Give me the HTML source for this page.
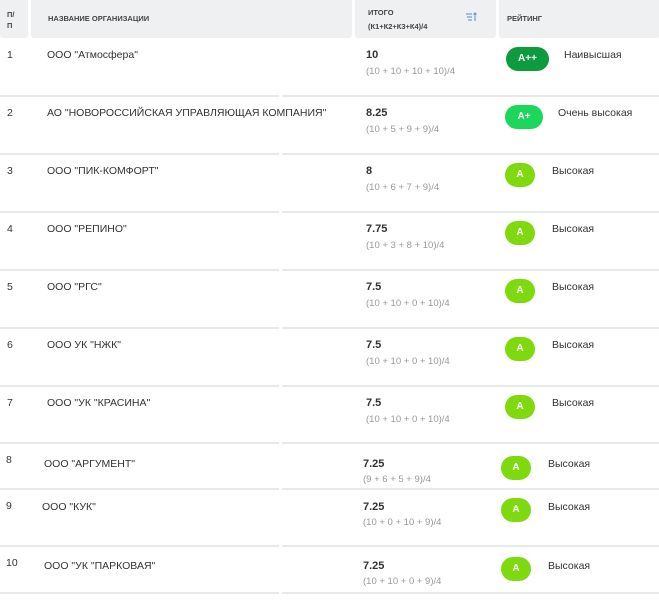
<!DOCTYPE html>
<html><head><meta charset="utf-8"><style>
*{margin:0;padding:0;box-sizing:border-box}
body{width:659px;height:600px;background:#fff;font-family:"Liberation Sans",sans-serif;color:#333;position:relative;overflow:hidden}
.h{position:absolute;top:0;height:38px;background:#eef0f1;font-size:7.5px;font-weight:bold;color:#444;border-radius:0 0 3px 3px}
.a{position:absolute;white-space:nowrap}
.t{font-size:10.5px;color:#333}
.s{font-size:11px;font-weight:bold;color:#333}
.f{font-size:9.5px;color:#999}
.ln{position:absolute;height:2px;background:#e6eaeb}
.b{position:absolute;height:24px;border-radius:12px;color:#fff;font-size:10px;font-weight:bold;text-align:center;line-height:24px}
</style></head><body>
<div class="h" style="left:0;width:28px"><div class="a" style="left:7px;top:9px;line-height:11px">П/<br>П</div></div>
<div class="h" style="left:31px;width:321px"><div class="a" style="left:17px;top:14px">НАЗВАНИЕ ОРГАНИЗАЦИИ</div></div>
<div class="h" style="left:355px;width:141px"><div class="a" style="left:13px;top:6px;line-height:14px">ИТОГО<br>(К1+К2+К3+К4)/4</div>
<svg class="a" style="left:111px;top:12px" width="12" height="10" viewBox="0 0 12 10"><path d="M0 2h6M1 5h5M2 8h4M9 1v8M7.5 2.5L9 1l1.5 1.5" stroke="#4a90d9" stroke-width="1" fill="none"/></svg></div>
<div class="h" style="left:499px;width:160px"><div class="a" style="left:8px;top:14px">РЕЙТИНГ</div></div>

<div class="a t" style="left:7px;top:49px">1</div><div class="a t" style="left:47px;top:49px">ООО "Атмосфера"</div>
<div class="a s" style="left:366px;top:49px">10</div><div class="a f" style="left:366px;top:66px">(10 + 10 + 10 + 10)/4</div>
<div class="b" style="left:506px;top:47px;width:43px;background:#0e9a3e">A++</div><div class="a t" style="left:564px;top:49px">Наивысшая</div>
<div class="ln" style="left:0;top:95px;width:279px"></div><div class="ln" style="left:282px;top:95px;width:377px"></div>

<div class="a t" style="left:7px;top:107px">2</div><div class="a t" style="left:47px;top:107px">АО "НОВОРОССИЙСКАЯ УПРАВЛЯЮЩАЯ КОМПАНИЯ"</div>
<div class="a s" style="left:366px;top:107px">8.25</div><div class="a f" style="left:366px;top:124px">(10 + 5 + 9 + 9)/4</div>
<div class="b" style="left:505px;top:105px;width:38px;background:#1dd65c">A+</div><div class="a t" style="left:558px;top:107px">Очень высокая</div>
<div class="ln" style="left:0;top:153px;width:279px"></div><div class="ln" style="left:282px;top:153px;width:377px"></div>

<div class="a t" style="left:7px;top:165px">3</div><div class="a t" style="left:47px;top:165px">ООО "ПИК-КОМФОРТ"</div>
<div class="a s" style="left:366px;top:165px">8</div><div class="a f" style="left:366px;top:182px">(10 + 6 + 7 + 9)/4</div>
<div class="b" style="left:505px;top:163px;width:30px;background:#7ed90f">A</div><div class="a t" style="left:552px;top:165px">Высокая</div>
<div class="ln" style="left:0;top:211px;width:279px"></div><div class="ln" style="left:282px;top:211px;width:377px"></div>

<div class="a t" style="left:7px;top:223px">4</div><div class="a t" style="left:47px;top:223px">ООО "РЕПИНО"</div>
<div class="a s" style="left:366px;top:223px">7.75</div><div class="a f" style="left:366px;top:240px">(10 + 3 + 8 + 10)/4</div>
<div class="b" style="left:505px;top:221px;width:30px;background:#7ed90f">A</div><div class="a t" style="left:552px;top:223px">Высокая</div>
<div class="ln" style="left:0;top:269px;width:279px"></div><div class="ln" style="left:282px;top:269px;width:377px"></div>

<div class="a t" style="left:7px;top:281px">5</div><div class="a t" style="left:47px;top:281px">ООО "РГС"</div>
<div class="a s" style="left:366px;top:281px">7.5</div><div class="a f" style="left:366px;top:298px">(10 + 10 + 0 + 10)/4</div>
<div class="b" style="left:505px;top:279px;width:30px;background:#7ed90f">A</div><div class="a t" style="left:552px;top:281px">Высокая</div>
<div class="ln" style="left:0;top:327px;width:279px"></div><div class="ln" style="left:282px;top:327px;width:377px"></div>

<div class="a t" style="left:7px;top:339px">6</div><div class="a t" style="left:47px;top:339px">ООО УК "НЖК"</div>
<div class="a s" style="left:366px;top:339px">7.5</div><div class="a f" style="left:366px;top:356px">(10 + 10 + 0 + 10)/4</div>
<div class="b" style="left:505px;top:337px;width:30px;background:#7ed90f">A</div><div class="a t" style="left:552px;top:339px">Высокая</div>
<div class="ln" style="left:0;top:385px;width:279px"></div><div class="ln" style="left:282px;top:385px;width:377px"></div>

<div class="a t" style="left:7px;top:397px">7</div><div class="a t" style="left:47px;top:397px">ООО "УК "КРАСИНА"</div>
<div class="a s" style="left:366px;top:397px">7.5</div><div class="a f" style="left:366px;top:414px">(10 + 10 + 0 + 10)/4</div>
<div class="b" style="left:505px;top:395px;width:30px;background:#7ed90f">A</div><div class="a t" style="left:552px;top:397px">Высокая</div>
<div class="ln" style="left:0;top:442px;width:279px"></div><div class="ln" style="left:282px;top:442px;width:377px"></div>

<div class="a t" style="left:6px;top:454px">8</div><div class="a t" style="left:44px;top:458px">ООО "АРГУМЕНТ"</div>
<div class="a s" style="left:363px;top:458px">7.25</div><div class="a f" style="left:363px;top:474px">(9 + 6 + 5 + 9)/4</div>
<div class="b" style="left:501px;top:456px;width:30px;background:#7ed90f">A</div><div class="a t" style="left:548px;top:458px">Высокая</div>
<div class="ln" style="left:0;top:488px;width:279px"></div><div class="ln" style="left:282px;top:488px;width:377px"></div>

<div class="a t" style="left:6px;top:500px">9</div><div class="a t" style="left:42px;top:501px">ООО "КУК"</div>
<div class="a s" style="left:363px;top:501px">7.25</div><div class="a f" style="left:363px;top:517px">(10 + 0 + 10 + 9)/4</div>
<div class="b" style="left:501px;top:498px;width:30px;background:#7ed90f">A</div><div class="a t" style="left:548px;top:501px">Высокая</div>
<div class="ln" style="left:0;top:545px;width:279px"></div><div class="ln" style="left:282px;top:545px;width:377px"></div>

<div class="a t" style="left:6px;top:557px">10</div><div class="a t" style="left:44px;top:560px">ООО "УК "ПАРКОВАЯ"</div>
<div class="a s" style="left:363px;top:560px">7.25</div><div class="a f" style="left:363px;top:576px">(10 + 10 + 0 + 9)/4</div>
<div class="b" style="left:501px;top:557px;width:30px;background:#7ed90f">A</div><div class="a t" style="left:548px;top:560px">Высокая</div>
<div class="ln" style="left:0;top:592px;width:279px"></div><div class="ln" style="left:282px;top:592px;width:377px"></div>
</body></html>
